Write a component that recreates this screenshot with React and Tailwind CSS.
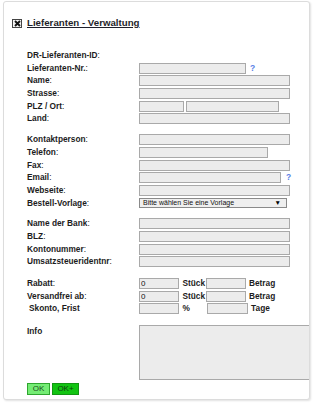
import React from 'react';

// shared field look
const field = "block h-[11px] border border-[#a9a9a9] bg-[#ececec] p-0 px-[1px] text-[8px] leading-[9px] text-[#111] outline-none";

function Label({ text, colon = true, indent = false }) {
  return (
    <div className={`w-[112px] shrink-0 h-[11px] leading-[11px] text-[8.3px] text-[#1c1c1c] whitespace-nowrap ${indent ? 'pl-[2px]' : ''}`}>
      <span className="font-bold">{text}</span>
      {colon && <span>:</span>}
    </div>
  );
}

function Row({ label, colon, indent, children }) {
  return (
    <div className="flex items-start h-[12.7px]">
      <Label text={label} colon={colon} indent={indent} />
      <div className="flex items-start h-[11px]">{children}</div>
    </div>
  );
}

function Help({ cls }) {
  return <div className={`${cls} h-[11px] leading-[11px] text-[8.5px] font-bold text-[#5b7fe6]`}>?</div>;
}

function Unit({ text, cls }) {
  return (
    <div className={`${cls} shrink-0 h-[11px] leading-[11px] text-[8.3px] font-bold text-[#1c1c1c] whitespace-nowrap`}>{text}</div>
  );
}

export default function App() {
  return (
    <div className="w-[315px] h-[405px] bg-white font-['Liberation_Sans',Arial,sans-serif] pt-[1px] pl-[3px]">
      <div className="w-[307px] h-[399px] border border-[#dcdcdc] rounded-[3px] bg-white overflow-hidden shadow-[1px_1px_2px_rgba(0,0,0,0.12)]">

        {/* Title */}
        <div className="flex items-center h-[12px] mt-[15px] pl-[8px] gap-[5px]">
          <div className="w-[10px] h-[9px] border border-[#444] bg-[#f4f4f4] flex items-center justify-center">
            <svg width="7" height="7" viewBox="0 0 7 7">
              <path d="M1 1 L6 6 M6 1 L1 6" stroke="#111" strokeWidth="1.9" />
            </svg>
          </div>
          <span className="text-[9.7px] font-bold text-[#1f1f2a] underline underline-offset-[1px]">Lieferanten - Verwaltung</span>
        </div>

        <div className="pl-[23px] mt-[21px]">
          {/* Stammdaten */}
          <div className="flex flex-col">
            <Row label="DR-Lieferanten-ID" />
            <Row label="Lieferanten-Nr.">
              <input readOnly className={`${field} w-[107px]`} />
              <Help cls="ml-[4px]" />
            </Row>
            <Row label="Name"><input readOnly className={`${field} w-[151px]`} /></Row>
            <Row label="Strasse"><input readOnly className={`${field} w-[151px]`} /></Row>
            <Row label="PLZ / Ort">
              <input readOnly className={`${field} w-[45px]`} />
              <input readOnly className={`${field} w-[93px] ml-[2px]`} />
            </Row>
            <Row label="Land"><input readOnly className={`${field} w-[151px]`} /></Row>
          </div>

          {/* Kontakt */}
          <div className="flex flex-col mt-[8px]">
            <Row label="Kontaktperson"><input readOnly className={`${field} w-[151px]`} /></Row>
            <Row label="Telefon"><input readOnly className={`${field} w-[129px]`} /></Row>
            <Row label="Fax"><input readOnly className={`${field} w-[151px]`} /></Row>
            <Row label="Email">
              <input readOnly className={`${field} w-[142px]`} />
              <Help cls="ml-[5px]" />
            </Row>
            <Row label="Webseite"><input readOnly className={`${field} w-[151px]`} /></Row>
            <Row label="Bestell-Vorlage">
              <div className="w-[148px] h-[10.5px] border border-[#8a8a8a] bg-[#efefef] flex items-center justify-between pl-[3px] pr-[5px]">
                <span className="text-[7px] leading-[8px] text-[#111]">Bitte wählen Sie eine Vorlage</span>
                <span className="text-[6.5px] leading-[8px] text-black">▼</span>
              </div>
            </Row>
          </div>

          {/* Bank */}
          <div className="flex flex-col mt-[8px]">
            <Row label="Name der Bank"><input readOnly className={`${field} w-[151px]`} /></Row>
            <Row label="BLZ"><input readOnly className={`${field} w-[151px]`} /></Row>
            <Row label="Kontonummer"><input readOnly className={`${field} w-[151px]`} /></Row>
            <Row label="Umsatzsteueridentnr"><input readOnly className={`${field} w-[151px]`} /></Row>
          </div>

          {/* Konditionen */}
          <div className="flex flex-col mt-[9px]">
            <Row label="Rabatt">
              <input readOnly value="0" className={`${field} w-[40px]`} />
              <Unit text="Stück" cls="ml-[3.5px] w-[23.5px]" />
              <input readOnly className={`${field} w-[40px]`} />
              <Unit text="Betrag" cls="ml-[3px]" />
            </Row>
            <Row label="Versandfrei ab">
              <input readOnly value="0" className={`${field} w-[40px]`} />
              <Unit text="Stück" cls="ml-[3.5px] w-[23.5px]" />
              <input readOnly className={`${field} w-[40px]`} />
              <Unit text="Betrag" cls="ml-[3px]" />
            </Row>
            <Row label="Skonto, Frist" colon={false} indent>
              <input readOnly className={`${field} w-[40px]`} />
              <Unit text="%" cls="ml-[3.5px] w-[24.8px]" />
              <input readOnly className={`${field} w-[40.5px]`} />
              <Unit text="Tage" cls="ml-[3.3px]" />
            </Row>
          </div>

          {/* Info */}
          <div className="flex items-start mt-[9px]">
            <div className="w-[112px] shrink-0 pt-[1px] text-[8.3px] leading-[11px] font-bold text-[#1c1c1c]">Info</div>
            <textarea readOnly className="block shrink-0 w-[190px] h-[55px] border border-[#a9a9a9] bg-[#ececec] resize-none outline-none" />
          </div>

          {/* Buttons */}
          <div className="flex mt-[3px] gap-[2px]">
            <button className="w-[23px] h-[12px] border border-[#2fa52f] bg-[#74ec74] text-[8px] leading-[10px] text-[#1b4d1b] p-0">OK</button>
            <button className="w-[27px] h-[12px] border border-[#129612] bg-[#12c412] text-[8px] leading-[10px] text-[#0f3d0f] p-0">OK+</button>
          </div>
        </div>
      </div>
    </div>
  );
}
